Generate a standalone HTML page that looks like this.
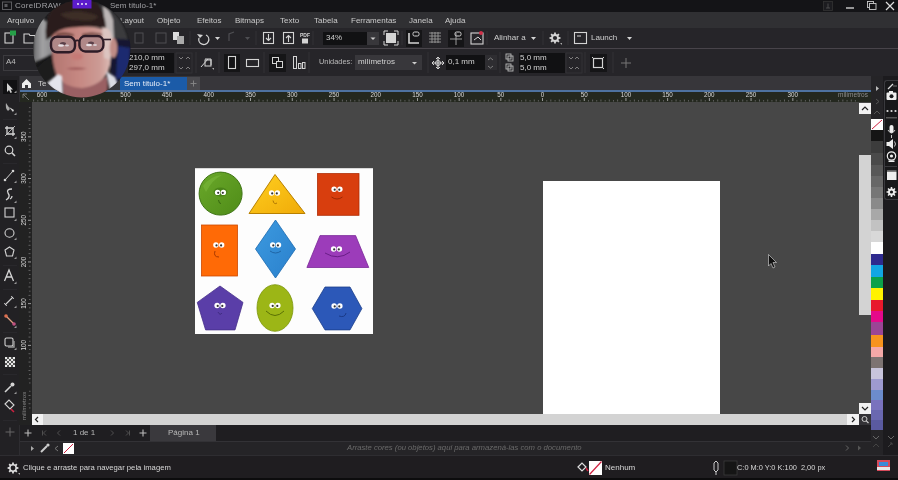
<!DOCTYPE html>
<html><head><meta charset="utf-8">
<style>
*{margin:0;padding:0;box-sizing:border-box}
html,body{width:898px;height:480px;overflow:hidden;background:#474747;font-family:"Liberation Sans",sans-serif;color:#d8d8d8}
.a{position:absolute}
.t{position:absolute;font-size:8px;line-height:10px;white-space:nowrap;color:#d2d2d2}
svg{position:absolute;overflow:visible}
</style></head><body>
<div style="position:absolute;left:0;top:0;width:898px;height:480px;overflow:hidden;filter:blur(0.4px)"><div class="a" style="left:0px;top:0px;width:898px;height:12px;background:#141417;"></div>
<div class="a" style="left:0px;top:12px;width:898px;height:16px;background:#303033;"></div>
<div class="a" style="left:0px;top:28px;width:898px;height:20px;background:#262529;"></div>
<div class="a" style="left:0px;top:48px;width:898px;height:1px;background:#48444a;"></div>
<div class="a" style="left:0px;top:49px;width:898px;height:27px;background:#262529;"></div>
<div class="a" style="left:20px;top:76px;width:851px;height:14px;background:#37363a;"></div>
<div class="a" style="left:0px;top:76px;width:20px;height:379px;background:#222124;"></div>
<div class="a" style="left:19px;top:76px;width:1px;height:379px;background:#2e2d31;"></div>
<div class="a" style="left:20px;top:90px;width:851px;height:2px;background:#4e72a0;"></div>
<div class="a" style="left:20px;top:92px;width:851px;height:10px;background:#24281f;"></div>
<div class="a" style="left:19px;top:102px;width:13px;height:323px;background:#222222;"></div>
<div class="a" style="left:543px;top:181px;width:177px;height:233px;background:#ffffff;"></div>
<!-- image -->
<svg class="a" style="left:0;top:0" width="898" height="480" viewBox="0 0 898 480">
<defs>
<linearGradient id="gG" x1="0" y1="0" x2="1" y2="1"><stop offset="0" stop-color="#6aa82a"/><stop offset="1" stop-color="#4f8c18"/></linearGradient>
<linearGradient id="gY" x1="0" y1="0" x2="1" y2="1"><stop offset="0" stop-color="#ffd020"/><stop offset="1" stop-color="#f0aa08"/></linearGradient>
<linearGradient id="gB" x1="0" y1="0" x2="1" y2="1"><stop offset="0" stop-color="#3c9ae0"/><stop offset="1" stop-color="#2a80cc"/></linearGradient>
</defs>
<rect x="195" y="168" width="178" height="166" fill="#fdfdfd"/>
<rect x="195" y="168" width="178" height="1" fill="#d8d8d8"/>
<circle cx="220.6" cy="193.6" r="21.5" fill="url(#gG)" stroke="#3e7414" stroke-width="1"/>
<path d="M203 186 Q210 176 222 175 Q212 180 206 192 Z" fill="#7ab83a" opacity="0.6"/>
<ellipse cx="220.5" cy="192" rx="7" ry="4.5" fill="#4a8418"/>
<circle cx="217.6" cy="192.4" r="2.7" fill="#fff"/><circle cx="223.4" cy="192.4" r="2.7" fill="#fff"/><circle cx="218.2" cy="192.8" r="1.1" fill="#333"/><circle cx="222.8" cy="192.8" r="1.1" fill="#333"/>
<path d="M218.5 200 Q219 204 221 203.5" stroke="#2f5a0c" stroke-width="0.8" fill="none"/>
<polygon points="275,174.5 249,213.5 305,213.5" fill="url(#gY)" stroke="#b88000" stroke-width="1" stroke-linejoin="round"/>
<circle cx="271.6" cy="193.0" r="2.7" fill="#fff"/><circle cx="277.4" cy="193.0" r="2.7" fill="#fff"/><circle cx="272.2" cy="193.4" r="1.1" fill="#333"/><circle cx="276.8" cy="193.4" r="1.1" fill="#333"/>
<path d="M273 200.5 Q274 205 277 203" stroke="#9a6400" stroke-width="0.8" fill="none"/>
<rect x="317.5" y="173.6" width="41.5" height="41.7" fill="#d83e0e" stroke="#b02c04" stroke-width="0.8"/>
<circle cx="334.1" cy="189.3" r="2.7" fill="#fff"/><circle cx="339.9" cy="189.3" r="2.7" fill="#fff"/><circle cx="334.7" cy="189.7" r="1.1" fill="#333"/><circle cx="339.3" cy="189.7" r="1.1" fill="#333"/>
<path d="M331.5 197 Q337 201 342.5 197" stroke="#9a2804" stroke-width="1" fill="none"/>
<rect x="201.5" y="225" width="36" height="51" fill="#ff6a06" stroke="#cc4a00" stroke-width="0.8"/>
<circle cx="215.9" cy="245.0" r="2.7" fill="#fff"/><circle cx="221.7" cy="245.0" r="2.7" fill="#fff"/><circle cx="216.5" cy="245.4" r="1.1" fill="#333"/><circle cx="221.1" cy="245.4" r="1.1" fill="#333"/>
<path d="M215 251 Q213 257 219 257" stroke="#a83800" stroke-width="1" fill="none"/>
<polygon points="275.5,220 295.5,249 275.5,278 255.5,249" fill="url(#gB)" stroke="#1a6ab0" stroke-width="0.8"/>
<circle cx="272.7" cy="245.0" r="2.7" fill="#fff"/><circle cx="278.5" cy="245.0" r="2.7" fill="#fff"/><circle cx="273.3" cy="245.4" r="1.1" fill="#333"/><circle cx="277.9" cy="245.4" r="1.1" fill="#333"/>
<path d="M270 251 Q275.5 255 281 251" stroke="#1a5a98" stroke-width="0.8" fill="none"/>
<polygon points="320,235.6 355.6,235.6 368.75,267.5 306.9,267.5" fill="#9c3cba" stroke="#7a2898" stroke-width="0.8"/>
<circle cx="333.6" cy="249.0" r="2.7" fill="#fff"/><circle cx="339.4" cy="249.0" r="2.7" fill="#fff"/><circle cx="334.2" cy="249.4" r="1.1" fill="#333"/><circle cx="338.8" cy="249.4" r="1.1" fill="#333"/>
<path d="M325 253 Q338 261 350 252" stroke="#6a1e88" stroke-width="1" fill="none"/>
<polygon points="220,286 243,302.4 235,329.9 205.6,329.9 197.25,302.4" fill="#5a3ea8" stroke="#48308a" stroke-width="0.8" stroke-linejoin="round"/>
<circle cx="217.1" cy="305.5" r="2.7" fill="#fff"/><circle cx="222.9" cy="305.5" r="2.7" fill="#fff"/><circle cx="217.7" cy="305.9" r="1.1" fill="#333"/><circle cx="222.3" cy="305.9" r="1.1" fill="#333"/>
<path d="M218 312 Q220 316 222 313" stroke="#3a2878" stroke-width="0.8" fill="none"/>
<ellipse cx="275" cy="308" rx="18" ry="23.3" fill="#9cb616" stroke="#7a9408" stroke-width="0.8"/>
<circle cx="272.1" cy="305.5" r="2.7" fill="#fff"/><circle cx="277.9" cy="305.5" r="2.7" fill="#fff"/><circle cx="272.7" cy="305.9" r="1.1" fill="#333"/><circle cx="277.3" cy="305.9" r="1.1" fill="#333"/>
<path d="M266 311 Q275 320 284 311" stroke="#5a7004" stroke-width="1" fill="none"/>
<polygon points="312.25,308.6 325,287 350,287 361.9,308.6 350,329.9 325,329.9" fill="#2c58b8" stroke="#1c3f8a" stroke-width="0.8" stroke-linejoin="round"/>
<circle cx="334.1" cy="306.0" r="2.7" fill="#fff"/><circle cx="339.9" cy="306.0" r="2.7" fill="#fff"/><circle cx="334.7" cy="306.4" r="1.1" fill="#333"/><circle cx="339.3" cy="306.4" r="1.1" fill="#333"/>
<path d="M339 316 Q345 318 346 313" stroke="#1a3a88" stroke-width="1" fill="none"/>
</svg>

<svg style="left:0;top:0" width="898" height="480"><path d="M768.5 254.5 L768.5 266 L771 263.5 L773 268 L775 267 L773 262.5 L776.5 262.5 Z" fill="#111" stroke="#ddd" stroke-width="0.6"/></svg>
<div class="a" style="left:19px;top:414px;width:13px;height:11px;background:#222222;"></div>
<div class="a" style="left:32px;top:414px;width:827px;height:11px;background:#d3d3d3;"></div>
<div class="a" style="left:32px;top:414px;width:11px;height:11px;background:#f2f2f2;"></div>
<svg style="left:31px;top:414px" width="12" height="11"><path d="M7 3 L4.5 5.5 L7 8" stroke="#222" stroke-width="1.2" fill="none"/></svg>
<div class="a" style="left:847px;top:414px;width:12px;height:11px;background:#f2f2f2;"></div>
<svg style="left:847px;top:414px" width="12" height="11"><path d="M5 3 L7.5 5.5 L5 8" stroke="#222" stroke-width="1.2" fill="none"/></svg>
<div class="a" style="left:859px;top:414px;width:12px;height:11px;background:#333236;"></div>
<svg style="left:859px;top:414px" width="12" height="11"><circle cx="5.5" cy="5" r="2.5" stroke="#ccc" stroke-width="1" fill="none"/><path d="M7.3 6.8 L9.5 9" stroke="#ccc" stroke-width="1.2"/></svg>
<div class="a" style="left:859px;top:102px;width:12px;height:312px;background:#474747;"></div>
<div class="a" style="left:859px;top:103px;width:12px;height:11px;background:#f2f2f2;"></div>
<svg style="left:859px;top:103px" width="12" height="11"><path d="M3 7 L6 4 L9 7" stroke="#222" stroke-width="1.2" fill="none"/></svg>
<div class="a" style="left:859px;top:155px;width:12px;height:160px;background:#d3d3d3;"></div>
<div class="a" style="left:859px;top:403px;width:12px;height:11px;background:#f2f2f2;"></div>
<svg style="left:859px;top:403px" width="12" height="11"><path d="M3 4 L6 7 L9 4" stroke="#222" stroke-width="1.2" fill="none"/></svg>
<div class="a" style="left:20px;top:425px;width:851px;height:16px;background:#1f1e21;"></div>
<div class="a" style="left:20px;top:441px;width:851px;height:1px;background:#333236;"></div>
<div class="a" style="left:20px;top:442px;width:851px;height:13px;background:#252427;"></div>
<div class="a" style="left:0px;top:455px;width:898px;height:1px;background:#2e2d31;"></div>
<div class="a" style="left:0px;top:456px;width:898px;height:22px;background:#1f1d20;"></div>
<div class="a" style="left:0px;top:478px;width:898px;height:2px;background:#0c0c0d;"></div>
<div class="a" style="left:150px;top:425px;width:66px;height:16px;background:#3a393d;"></div>
<div class="t" style="left:168px;top:428px;font-size:8px;color:#b8b8b8;">Página 1</div>
<div class="t" style="left:73px;top:428px;font-size:8px;color:#b8b8b8;">1 de 1</div>
<svg style="left:0;top:425px" width="200" height="16">
<path d="M24.5 8 H31.5 M28 4.5 V11.5" stroke="#bbb" stroke-width="1.1"/>
<path d="M46 5.5 L43.5 8 L46 10.5 M42.5 5.5 V10.5" stroke="#555" stroke-width="0.9" fill="none"/>
<path d="M60 5.5 L57.5 8 L60 10.5" stroke="#555" stroke-width="0.9" fill="none"/>
<path d="M111 5.5 L113.5 8 L111 10.5" stroke="#555" stroke-width="0.9" fill="none"/>
<path d="M126 5.5 L128.5 8 L126 10.5 M129.5 5.5 V10.5" stroke="#555" stroke-width="0.9" fill="none"/>
<path d="M139.5 8 H146.5 M143 4.5 V11.5" stroke="#bbb" stroke-width="1.1"/>
</svg>
<svg style="left:840px;top:441px" width="30" height="14"><path d="M6 4.5 L8.5 7 L6 9.5" stroke="#666" stroke-width="1" fill="none"/><path d="M18 4.5 L21 7 L18 9.5 Z" fill="#555"/></svg>
<div class="t" style="left:347px;top:443px;font-size:7.7px;color:#6a6a6a;font-style:italic">Arraste cores (ou objetos) aqui para armazená-las com o documento</div>
<svg style="left:0;top:441px" width="100" height="14">
<path d="M31 5 L34 7.5 L31 10 Z" fill="#aaa"/>
<path d="M41 11 L47 5" stroke="#ccc" stroke-width="2"/><circle cx="48" cy="4" r="1.6" fill="#ccc"/>
<path d="M58 5 L55 7.5 L58 10" stroke="#777" stroke-width="1" fill="none"/>
<rect x="63" y="2" width="11" height="11" fill="#fff"/><path d="M64 12 L73 3" stroke="#d02040" stroke-width="1"/>
</svg>
<svg style="left:0;top:456px" width="40" height="24"><path d="M16.89 11.07 L18.44 11.18 L18.44 12.82 L16.89 12.93 L16.41 14.09 L17.42 15.27 L16.27 16.42 L15.09 15.41 L13.93 15.89 L13.82 17.44 L12.18 17.44 L12.07 15.89 L10.91 15.41 L9.73 16.42 L8.58 15.27 L9.59 14.09 L9.11 12.93 L7.56 12.82 L7.56 11.18 L9.11 11.07 L9.59 9.91 L8.58 8.73 L9.73 7.58 L10.91 8.59 L12.07 8.11 L12.18 6.56 L13.82 6.56 L13.93 8.11 L15.09 8.59 L16.27 7.58 L17.42 8.73 L16.41 9.91 Z" fill="#ddd"/><circle cx="13" cy="12" r="2.4" fill="#1f1d20"/><path d="M18 17 L20 17 L20 19 Z" fill="#aaa"/></svg>
<div class="t" style="left:23px;top:463px;font-size:7.7px;color:#d8d8d8;">Clique e arraste para navegar pela imagem</div>
<svg style="left:575px;top:456px" width="40" height="24">
<path d="M3 11 L7 7 L11 11 L7 15 Z" fill="none" stroke="#ddd" stroke-width="1.2"/><path d="M11 12 L13 15" stroke="#d02040" stroke-width="1.5"/>
<rect x="14" y="5" width="13" height="14" fill="#fff"/><path d="M14.5 18.5 L26.5 5.5" stroke="#d02040" stroke-width="1.2"/>
</svg>
<div class="t" style="left:605px;top:463px;font-size:8px;color:#d8d8d8;">Nenhum</div>
<svg style="left:708px;top:456px" width="30" height="24">
<path d="M6 7 L8 5 L10 7 V14 L8 16 L6 14 Z" fill="none" stroke="#ccc" stroke-width="1"/><path d="M8 16 V19" stroke="#ccc"/>
<rect x="16" y="5" width="13" height="14" fill="#151515" stroke="#3a3a3a" stroke-width="0.8"/>
</svg>
<div class="t" style="left:737px;top:463px;font-size:7.4px;color:#d8d8d8;">C:0 M:0 Y:0 K:100 &nbsp;2,00 px</div>
<svg style="left:876px;top:458px" width="20" height="16">
<rect x="1" y="2" width="13" height="11" fill="#d64a5a"/><rect x="3" y="4" width="9" height="4" fill="#3a8ad8"/><rect x="1" y="9" width="13" height="3" fill="#e8e8e8"/>
</svg>
<div class="a" style="left:871px;top:76px;width:13px;height:379px;background:#252427;"></div>
<div class="a" style="left:883px;top:76px;width:15px;height:379px;background:#1c1b1e;"></div>
<svg style="left:871px;top:119px" width="12" height="11"><rect width="12" height="11" fill="#fff"/><line x1="1" y1="10" x2="11" y2="1" stroke="#d02040" stroke-width="1"/></svg>
<div class="a" style="left:871px;top:130px;width:12px;height:11px;background:#151515;"></div>
<div class="a" style="left:871px;top:141px;width:12px;height:12px;background:#3c3c3c;"></div>
<div class="a" style="left:871px;top:153px;width:12px;height:12px;background:#4a4a4a;"></div>
<div class="a" style="left:871px;top:165px;width:12px;height:11px;background:#585858;"></div>
<div class="a" style="left:871px;top:176px;width:12px;height:11px;background:#676767;"></div>
<div class="a" style="left:871px;top:187px;width:12px;height:11px;background:#767676;"></div>
<div class="a" style="left:871px;top:198px;width:12px;height:11px;background:#8a8a8a;"></div>
<div class="a" style="left:871px;top:209px;width:12px;height:11px;background:#a8a8a8;"></div>
<div class="a" style="left:871px;top:220px;width:12px;height:11px;background:#c2c2c2;"></div>
<div class="a" style="left:871px;top:231px;width:12px;height:11px;background:#d8d8d8;"></div>
<div class="a" style="left:871px;top:242px;width:12px;height:12px;background:#ffffff;"></div>
<div class="a" style="left:871px;top:254px;width:12px;height:11px;background:#2e2a8e;"></div>
<div class="a" style="left:871px;top:265px;width:12px;height:12px;background:#12a6e4;"></div>
<div class="a" style="left:871px;top:277px;width:12px;height:11px;background:#0ca14a;"></div>
<div class="a" style="left:871px;top:288px;width:12px;height:12px;background:#fff200;"></div>
<div class="a" style="left:871px;top:300px;width:12px;height:11px;background:#e8192c;"></div>
<div class="a" style="left:871px;top:311px;width:12px;height:11px;background:#e5098a;"></div>
<div class="a" style="left:871px;top:322px;width:12px;height:13px;background:#9b4595;"></div>
<div class="a" style="left:871px;top:335px;width:12px;height:12px;background:#f7931e;"></div>
<div class="a" style="left:871px;top:347px;width:12px;height:10px;background:#f4a8a8;"></div>
<div class="a" style="left:871px;top:357px;width:12px;height:11px;background:#7d7372;"></div>
<div class="a" style="left:871px;top:368px;width:12px;height:11px;background:#c8c4dc;"></div>
<div class="a" style="left:871px;top:379px;width:12px;height:11px;background:#9e9ad0;"></div>
<div class="a" style="left:871px;top:390px;width:12px;height:10px;background:#6c8ccc;"></div>
<div class="a" style="left:871px;top:400px;width:12px;height:10px;background:#7a72be;"></div>
<div class="a" style="left:871px;top:410px;width:12px;height:10px;background:#6a68b0;"></div>
<div class="a" style="left:871px;top:420px;width:12px;height:10px;background:#5a5aa0;"></div>
<svg style="left:871px;top:76px" width="12" height="43">
<path d="M5 10 L8 12.5 L5 15 Z" fill="#bbb"/>
<path d="M5 23 L8 25.5 L5 28" stroke="#555" fill="none"/>
<path d="M3 38 L6 35 L9 38" stroke="#555" fill="none"/>
</svg>
<svg style="left:871px;top:430px" width="27" height="25">
<path d="M2 6 L5 9 L8 6" stroke="#666" fill="none"/><path d="M17 6 L20 9 L23 6" stroke="#666" fill="none"/>
<path d="M2 17 L5 14 L8 17" stroke="#444" fill="none"/><path d="M17 17 L21 13 M19 13 H21 V15" stroke="#444" fill="none"/>
</svg>
<div class="a" style="left:884px;top:80px;width:14px;height:120px;background:#18181a;border:1px solid #3a3a3e;border-right:none;border-radius:3px 0 0 3px"></div>
<svg style="left:884px;top:80px" width="14" height="120" viewBox="0 0 14 120">
<path d="M4 9 L9 4" stroke="#ddd" stroke-width="1.2"/><path d="M9 6 H13" stroke="#888" stroke-width="0.8"/>
<rect x="2.5" y="12.5" width="10" height="7.5" rx="1" fill="#eee"/><rect x="5" y="11" width="4" height="2" fill="#eee"/><circle cx="7.5" cy="16.3" r="2" fill="#18181a"/>
<circle cx="3.5" cy="31" r="1.1" fill="#ddd"/><circle cx="7.5" cy="31" r="1.1" fill="#ddd"/><circle cx="11.5" cy="31" r="1.1" fill="#ddd"/>
<rect x="2" y="37" width="11" height="1.5" fill="#555"/>
<rect x="5.5" y="45" width="4" height="8" rx="2" fill="#eee"/><path d="M4 50 Q7.5 56 11 50 M7.5 55 V58" stroke="#ddd" stroke-width="0.9" fill="none"/>
<path d="M2.5 62 H5 L9 59 V69 L5 66 H2.5 Z" fill="#eee"/><path d="M10.5 61.5 Q12.5 64 10.5 66.5" stroke="#ddd" stroke-width="0.9" fill="none"/>
<circle cx="7.5" cy="76" r="4.2" fill="none" stroke="#eee" stroke-width="1.2"/><circle cx="7.5" cy="76" r="1.6" fill="#eee"/><rect x="4.5" y="80.5" width="6" height="1.5" fill="#eee"/>
<rect x="1" y="86" width="12" height="1" fill="#3a3a3e"/>
<rect x="3" y="92" width="9.5" height="8" fill="#eee"/><rect x="3" y="90.5" width="9.5" height="1.2" fill="#aaa"/>
<path d="M11.00 111.16 L12.44 111.26 L12.44 112.74 L11.00 112.84 L10.57 113.88 L11.52 114.97 L10.47 116.02 L9.38 115.07 L8.34 115.50 L8.24 116.94 L6.76 116.94 L6.66 115.50 L5.62 115.07 L4.53 116.02 L3.48 114.97 L4.43 113.88 L4.00 112.84 L2.56 112.74 L2.56 111.26 L4.00 111.16 L4.43 110.12 L3.48 109.03 L4.53 107.98 L5.62 108.93 L6.66 108.50 L6.76 107.06 L8.24 107.06 L8.34 108.50 L9.38 108.93 L10.47 107.98 L11.52 109.03 L10.57 110.12 Z" fill="#eee"/><circle cx="7.5" cy="112" r="1.6" fill="#18181a"/>
</svg>
<svg style="left:0;top:0" width="898" height="480">
<text x="42.0" y="97.3" font-size="6.3" fill="#d8d8d8" text-anchor="middle" font-family="Liberation Sans">600</text>
<rect x="41.6" y="98" width="0.9" height="3" fill="#aaa"/>
<text x="83.7" y="97.3" font-size="6.3" fill="#d8d8d8" text-anchor="middle" font-family="Liberation Sans">550</text>
<rect x="83.3" y="98" width="0.9" height="3" fill="#aaa"/>
<text x="125.4" y="97.3" font-size="6.3" fill="#d8d8d8" text-anchor="middle" font-family="Liberation Sans">500</text>
<rect x="125.0" y="98" width="0.9" height="3" fill="#aaa"/>
<text x="167.1" y="97.3" font-size="6.3" fill="#d8d8d8" text-anchor="middle" font-family="Liberation Sans">450</text>
<rect x="166.7" y="98" width="0.9" height="3" fill="#aaa"/>
<text x="208.8" y="97.3" font-size="6.3" fill="#d8d8d8" text-anchor="middle" font-family="Liberation Sans">400</text>
<rect x="208.4" y="98" width="0.9" height="3" fill="#aaa"/>
<text x="250.5" y="97.3" font-size="6.3" fill="#d8d8d8" text-anchor="middle" font-family="Liberation Sans">350</text>
<rect x="250.1" y="98" width="0.9" height="3" fill="#aaa"/>
<text x="292.2" y="97.3" font-size="6.3" fill="#d8d8d8" text-anchor="middle" font-family="Liberation Sans">300</text>
<rect x="291.8" y="98" width="0.9" height="3" fill="#aaa"/>
<text x="333.9" y="97.3" font-size="6.3" fill="#d8d8d8" text-anchor="middle" font-family="Liberation Sans">250</text>
<rect x="333.6" y="98" width="0.9" height="3" fill="#aaa"/>
<text x="375.7" y="97.3" font-size="6.3" fill="#d8d8d8" text-anchor="middle" font-family="Liberation Sans">200</text>
<rect x="375.3" y="98" width="0.9" height="3" fill="#aaa"/>
<text x="417.4" y="97.3" font-size="6.3" fill="#d8d8d8" text-anchor="middle" font-family="Liberation Sans">150</text>
<rect x="417.0" y="98" width="0.9" height="3" fill="#aaa"/>
<text x="459.1" y="97.3" font-size="6.3" fill="#d8d8d8" text-anchor="middle" font-family="Liberation Sans">100</text>
<rect x="458.7" y="98" width="0.9" height="3" fill="#aaa"/>
<text x="500.8" y="97.3" font-size="6.3" fill="#d8d8d8" text-anchor="middle" font-family="Liberation Sans">50</text>
<rect x="500.4" y="98" width="0.9" height="3" fill="#aaa"/>
<text x="542.5" y="97.3" font-size="6.3" fill="#d8d8d8" text-anchor="middle" font-family="Liberation Sans">0</text>
<rect x="542.1" y="98" width="0.9" height="3" fill="#aaa"/>
<text x="584.2" y="97.3" font-size="6.3" fill="#d8d8d8" text-anchor="middle" font-family="Liberation Sans">50</text>
<rect x="583.8" y="98" width="0.9" height="3" fill="#aaa"/>
<text x="625.9" y="97.3" font-size="6.3" fill="#d8d8d8" text-anchor="middle" font-family="Liberation Sans">100</text>
<rect x="625.5" y="98" width="0.9" height="3" fill="#aaa"/>
<text x="667.6" y="97.3" font-size="6.3" fill="#d8d8d8" text-anchor="middle" font-family="Liberation Sans">150</text>
<rect x="667.2" y="98" width="0.9" height="3" fill="#aaa"/>
<text x="709.3" y="97.3" font-size="6.3" fill="#d8d8d8" text-anchor="middle" font-family="Liberation Sans">200</text>
<rect x="708.9" y="98" width="0.9" height="3" fill="#aaa"/>
<text x="751.0" y="97.3" font-size="6.3" fill="#d8d8d8" text-anchor="middle" font-family="Liberation Sans">250</text>
<rect x="750.6" y="98" width="0.9" height="3" fill="#aaa"/>
<text x="792.8" y="97.3" font-size="6.3" fill="#d8d8d8" text-anchor="middle" font-family="Liberation Sans">300</text>
<rect x="792.4" y="98" width="0.9" height="3" fill="#aaa"/>
<rect x="33.2" y="99.5" width="0.9" height="2.0" fill="#6a6a6a"/>
<rect x="37.4" y="100.1" width="0.9" height="1.4" fill="#6a6a6a"/>
<rect x="45.8" y="100.1" width="0.9" height="1.4" fill="#6a6a6a"/>
<rect x="49.9" y="99.5" width="0.9" height="2.0" fill="#6a6a6a"/>
<rect x="54.1" y="100.1" width="0.9" height="1.4" fill="#6a6a6a"/>
<rect x="58.3" y="99.5" width="0.9" height="2.0" fill="#6a6a6a"/>
<rect x="62.4" y="100.1" width="0.9" height="1.4" fill="#6a6a6a"/>
<rect x="66.6" y="99.5" width="0.9" height="2.0" fill="#6a6a6a"/>
<rect x="70.8" y="100.1" width="0.9" height="1.4" fill="#6a6a6a"/>
<rect x="74.9" y="99.5" width="0.9" height="2.0" fill="#6a6a6a"/>
<rect x="79.1" y="100.1" width="0.9" height="1.4" fill="#6a6a6a"/>
<rect x="87.5" y="100.1" width="0.9" height="1.4" fill="#6a6a6a"/>
<rect x="91.6" y="99.5" width="0.9" height="2.0" fill="#6a6a6a"/>
<rect x="95.8" y="100.1" width="0.9" height="1.4" fill="#6a6a6a"/>
<rect x="100.0" y="99.5" width="0.9" height="2.0" fill="#6a6a6a"/>
<rect x="104.1" y="100.1" width="0.9" height="1.4" fill="#6a6a6a"/>
<rect x="108.3" y="99.5" width="0.9" height="2.0" fill="#6a6a6a"/>
<rect x="112.5" y="100.1" width="0.9" height="1.4" fill="#6a6a6a"/>
<rect x="116.7" y="99.5" width="0.9" height="2.0" fill="#6a6a6a"/>
<rect x="120.8" y="100.1" width="0.9" height="1.4" fill="#6a6a6a"/>
<rect x="129.2" y="100.1" width="0.9" height="1.4" fill="#6a6a6a"/>
<rect x="133.3" y="99.5" width="0.9" height="2.0" fill="#6a6a6a"/>
<rect x="137.5" y="100.1" width="0.9" height="1.4" fill="#6a6a6a"/>
<rect x="141.7" y="99.5" width="0.9" height="2.0" fill="#6a6a6a"/>
<rect x="145.9" y="100.1" width="0.9" height="1.4" fill="#6a6a6a"/>
<rect x="150.0" y="99.5" width="0.9" height="2.0" fill="#6a6a6a"/>
<rect x="154.2" y="100.1" width="0.9" height="1.4" fill="#6a6a6a"/>
<rect x="158.4" y="99.5" width="0.9" height="2.0" fill="#6a6a6a"/>
<rect x="162.5" y="100.1" width="0.9" height="1.4" fill="#6a6a6a"/>
<rect x="170.9" y="100.1" width="0.9" height="1.4" fill="#6a6a6a"/>
<rect x="175.1" y="99.5" width="0.9" height="2.0" fill="#6a6a6a"/>
<rect x="179.2" y="100.1" width="0.9" height="1.4" fill="#6a6a6a"/>
<rect x="183.4" y="99.5" width="0.9" height="2.0" fill="#6a6a6a"/>
<rect x="187.6" y="100.1" width="0.9" height="1.4" fill="#6a6a6a"/>
<rect x="191.7" y="99.5" width="0.9" height="2.0" fill="#6a6a6a"/>
<rect x="195.9" y="100.1" width="0.9" height="1.4" fill="#6a6a6a"/>
<rect x="200.1" y="99.5" width="0.9" height="2.0" fill="#6a6a6a"/>
<rect x="204.2" y="100.1" width="0.9" height="1.4" fill="#6a6a6a"/>
<rect x="212.6" y="100.1" width="0.9" height="1.4" fill="#6a6a6a"/>
<rect x="216.8" y="99.5" width="0.9" height="2.0" fill="#6a6a6a"/>
<rect x="220.9" y="100.1" width="0.9" height="1.4" fill="#6a6a6a"/>
<rect x="225.1" y="99.5" width="0.9" height="2.0" fill="#6a6a6a"/>
<rect x="229.3" y="100.1" width="0.9" height="1.4" fill="#6a6a6a"/>
<rect x="233.4" y="99.5" width="0.9" height="2.0" fill="#6a6a6a"/>
<rect x="237.6" y="100.1" width="0.9" height="1.4" fill="#6a6a6a"/>
<rect x="241.8" y="99.5" width="0.9" height="2.0" fill="#6a6a6a"/>
<rect x="246.0" y="100.1" width="0.9" height="1.4" fill="#6a6a6a"/>
<rect x="254.3" y="100.1" width="0.9" height="1.4" fill="#6a6a6a"/>
<rect x="258.5" y="99.5" width="0.9" height="2.0" fill="#6a6a6a"/>
<rect x="262.6" y="100.1" width="0.9" height="1.4" fill="#6a6a6a"/>
<rect x="266.8" y="99.5" width="0.9" height="2.0" fill="#6a6a6a"/>
<rect x="271.0" y="100.1" width="0.9" height="1.4" fill="#6a6a6a"/>
<rect x="275.2" y="99.5" width="0.9" height="2.0" fill="#6a6a6a"/>
<rect x="279.3" y="100.1" width="0.9" height="1.4" fill="#6a6a6a"/>
<rect x="283.5" y="99.5" width="0.9" height="2.0" fill="#6a6a6a"/>
<rect x="287.7" y="100.1" width="0.9" height="1.4" fill="#6a6a6a"/>
<rect x="296.0" y="100.1" width="0.9" height="1.4" fill="#6a6a6a"/>
<rect x="300.2" y="99.5" width="0.9" height="2.0" fill="#6a6a6a"/>
<rect x="304.4" y="100.1" width="0.9" height="1.4" fill="#6a6a6a"/>
<rect x="308.5" y="99.5" width="0.9" height="2.0" fill="#6a6a6a"/>
<rect x="312.7" y="100.1" width="0.9" height="1.4" fill="#6a6a6a"/>
<rect x="316.9" y="99.5" width="0.9" height="2.0" fill="#6a6a6a"/>
<rect x="321.0" y="100.1" width="0.9" height="1.4" fill="#6a6a6a"/>
<rect x="325.2" y="99.5" width="0.9" height="2.0" fill="#6a6a6a"/>
<rect x="329.4" y="100.1" width="0.9" height="1.4" fill="#6a6a6a"/>
<rect x="337.7" y="100.1" width="0.9" height="1.4" fill="#6a6a6a"/>
<rect x="341.9" y="99.5" width="0.9" height="2.0" fill="#6a6a6a"/>
<rect x="346.1" y="100.1" width="0.9" height="1.4" fill="#6a6a6a"/>
<rect x="350.2" y="99.5" width="0.9" height="2.0" fill="#6a6a6a"/>
<rect x="354.4" y="100.1" width="0.9" height="1.4" fill="#6a6a6a"/>
<rect x="358.6" y="99.5" width="0.9" height="2.0" fill="#6a6a6a"/>
<rect x="362.7" y="100.1" width="0.9" height="1.4" fill="#6a6a6a"/>
<rect x="366.9" y="99.5" width="0.9" height="2.0" fill="#6a6a6a"/>
<rect x="371.1" y="100.1" width="0.9" height="1.4" fill="#6a6a6a"/>
<rect x="379.4" y="100.1" width="0.9" height="1.4" fill="#6a6a6a"/>
<rect x="383.6" y="99.5" width="0.9" height="2.0" fill="#6a6a6a"/>
<rect x="387.8" y="100.1" width="0.9" height="1.4" fill="#6a6a6a"/>
<rect x="391.9" y="99.5" width="0.9" height="2.0" fill="#6a6a6a"/>
<rect x="396.1" y="100.1" width="0.9" height="1.4" fill="#6a6a6a"/>
<rect x="400.3" y="99.5" width="0.9" height="2.0" fill="#6a6a6a"/>
<rect x="404.5" y="100.1" width="0.9" height="1.4" fill="#6a6a6a"/>
<rect x="408.6" y="99.5" width="0.9" height="2.0" fill="#6a6a6a"/>
<rect x="412.8" y="100.1" width="0.9" height="1.4" fill="#6a6a6a"/>
<rect x="421.1" y="100.1" width="0.9" height="1.4" fill="#6a6a6a"/>
<rect x="425.3" y="99.5" width="0.9" height="2.0" fill="#6a6a6a"/>
<rect x="429.5" y="100.1" width="0.9" height="1.4" fill="#6a6a6a"/>
<rect x="433.7" y="99.5" width="0.9" height="2.0" fill="#6a6a6a"/>
<rect x="437.8" y="100.1" width="0.9" height="1.4" fill="#6a6a6a"/>
<rect x="442.0" y="99.5" width="0.9" height="2.0" fill="#6a6a6a"/>
<rect x="446.2" y="100.1" width="0.9" height="1.4" fill="#6a6a6a"/>
<rect x="450.3" y="99.5" width="0.9" height="2.0" fill="#6a6a6a"/>
<rect x="454.5" y="100.1" width="0.9" height="1.4" fill="#6a6a6a"/>
<rect x="462.9" y="100.1" width="0.9" height="1.4" fill="#6a6a6a"/>
<rect x="467.0" y="99.5" width="0.9" height="2.0" fill="#6a6a6a"/>
<rect x="471.2" y="100.1" width="0.9" height="1.4" fill="#6a6a6a"/>
<rect x="475.4" y="99.5" width="0.9" height="2.0" fill="#6a6a6a"/>
<rect x="479.5" y="100.1" width="0.9" height="1.4" fill="#6a6a6a"/>
<rect x="483.7" y="99.5" width="0.9" height="2.0" fill="#6a6a6a"/>
<rect x="487.9" y="100.1" width="0.9" height="1.4" fill="#6a6a6a"/>
<rect x="492.0" y="99.5" width="0.9" height="2.0" fill="#6a6a6a"/>
<rect x="496.2" y="100.1" width="0.9" height="1.4" fill="#6a6a6a"/>
<rect x="504.6" y="100.1" width="0.9" height="1.4" fill="#6a6a6a"/>
<rect x="508.7" y="99.5" width="0.9" height="2.0" fill="#6a6a6a"/>
<rect x="512.9" y="100.1" width="0.9" height="1.4" fill="#6a6a6a"/>
<rect x="517.1" y="99.5" width="0.9" height="2.0" fill="#6a6a6a"/>
<rect x="521.2" y="100.1" width="0.9" height="1.4" fill="#6a6a6a"/>
<rect x="525.4" y="99.5" width="0.9" height="2.0" fill="#6a6a6a"/>
<rect x="529.6" y="100.1" width="0.9" height="1.4" fill="#6a6a6a"/>
<rect x="533.8" y="99.5" width="0.9" height="2.0" fill="#6a6a6a"/>
<rect x="537.9" y="100.1" width="0.9" height="1.4" fill="#6a6a6a"/>
<rect x="546.3" y="100.1" width="0.9" height="1.4" fill="#6a6a6a"/>
<rect x="550.4" y="99.5" width="0.9" height="2.0" fill="#6a6a6a"/>
<rect x="554.6" y="100.1" width="0.9" height="1.4" fill="#6a6a6a"/>
<rect x="558.8" y="99.5" width="0.9" height="2.0" fill="#6a6a6a"/>
<rect x="563.0" y="100.1" width="0.9" height="1.4" fill="#6a6a6a"/>
<rect x="567.1" y="99.5" width="0.9" height="2.0" fill="#6a6a6a"/>
<rect x="571.3" y="100.1" width="0.9" height="1.4" fill="#6a6a6a"/>
<rect x="575.5" y="99.5" width="0.9" height="2.0" fill="#6a6a6a"/>
<rect x="579.6" y="100.1" width="0.9" height="1.4" fill="#6a6a6a"/>
<rect x="588.0" y="100.1" width="0.9" height="1.4" fill="#6a6a6a"/>
<rect x="592.2" y="99.5" width="0.9" height="2.0" fill="#6a6a6a"/>
<rect x="596.3" y="100.1" width="0.9" height="1.4" fill="#6a6a6a"/>
<rect x="600.5" y="99.5" width="0.9" height="2.0" fill="#6a6a6a"/>
<rect x="604.7" y="100.1" width="0.9" height="1.4" fill="#6a6a6a"/>
<rect x="608.8" y="99.5" width="0.9" height="2.0" fill="#6a6a6a"/>
<rect x="613.0" y="100.1" width="0.9" height="1.4" fill="#6a6a6a"/>
<rect x="617.2" y="99.5" width="0.9" height="2.0" fill="#6a6a6a"/>
<rect x="621.3" y="100.1" width="0.9" height="1.4" fill="#6a6a6a"/>
<rect x="629.7" y="100.1" width="0.9" height="1.4" fill="#6a6a6a"/>
<rect x="633.9" y="99.5" width="0.9" height="2.0" fill="#6a6a6a"/>
<rect x="638.0" y="100.1" width="0.9" height="1.4" fill="#6a6a6a"/>
<rect x="642.2" y="99.5" width="0.9" height="2.0" fill="#6a6a6a"/>
<rect x="646.4" y="100.1" width="0.9" height="1.4" fill="#6a6a6a"/>
<rect x="650.5" y="99.5" width="0.9" height="2.0" fill="#6a6a6a"/>
<rect x="654.7" y="100.1" width="0.9" height="1.4" fill="#6a6a6a"/>
<rect x="658.9" y="99.5" width="0.9" height="2.0" fill="#6a6a6a"/>
<rect x="663.1" y="100.1" width="0.9" height="1.4" fill="#6a6a6a"/>
<rect x="671.4" y="100.1" width="0.9" height="1.4" fill="#6a6a6a"/>
<rect x="675.6" y="99.5" width="0.9" height="2.0" fill="#6a6a6a"/>
<rect x="679.7" y="100.1" width="0.9" height="1.4" fill="#6a6a6a"/>
<rect x="683.9" y="99.5" width="0.9" height="2.0" fill="#6a6a6a"/>
<rect x="688.1" y="100.1" width="0.9" height="1.4" fill="#6a6a6a"/>
<rect x="692.3" y="99.5" width="0.9" height="2.0" fill="#6a6a6a"/>
<rect x="696.4" y="100.1" width="0.9" height="1.4" fill="#6a6a6a"/>
<rect x="700.6" y="99.5" width="0.9" height="2.0" fill="#6a6a6a"/>
<rect x="704.8" y="100.1" width="0.9" height="1.4" fill="#6a6a6a"/>
<rect x="713.1" y="100.1" width="0.9" height="1.4" fill="#6a6a6a"/>
<rect x="717.3" y="99.5" width="0.9" height="2.0" fill="#6a6a6a"/>
<rect x="721.5" y="100.1" width="0.9" height="1.4" fill="#6a6a6a"/>
<rect x="725.6" y="99.5" width="0.9" height="2.0" fill="#6a6a6a"/>
<rect x="729.8" y="100.1" width="0.9" height="1.4" fill="#6a6a6a"/>
<rect x="734.0" y="99.5" width="0.9" height="2.0" fill="#6a6a6a"/>
<rect x="738.1" y="100.1" width="0.9" height="1.4" fill="#6a6a6a"/>
<rect x="742.3" y="99.5" width="0.9" height="2.0" fill="#6a6a6a"/>
<rect x="746.5" y="100.1" width="0.9" height="1.4" fill="#6a6a6a"/>
<rect x="754.8" y="100.1" width="0.9" height="1.4" fill="#6a6a6a"/>
<rect x="759.0" y="99.5" width="0.9" height="2.0" fill="#6a6a6a"/>
<rect x="763.2" y="100.1" width="0.9" height="1.4" fill="#6a6a6a"/>
<rect x="767.3" y="99.5" width="0.9" height="2.0" fill="#6a6a6a"/>
<rect x="771.5" y="100.1" width="0.9" height="1.4" fill="#6a6a6a"/>
<rect x="775.7" y="99.5" width="0.9" height="2.0" fill="#6a6a6a"/>
<rect x="779.8" y="100.1" width="0.9" height="1.4" fill="#6a6a6a"/>
<rect x="784.0" y="99.5" width="0.9" height="2.0" fill="#6a6a6a"/>
<rect x="788.2" y="100.1" width="0.9" height="1.4" fill="#6a6a6a"/>
<rect x="796.5" y="100.1" width="0.9" height="1.4" fill="#6a6a6a"/>
<rect x="800.7" y="99.5" width="0.9" height="2.0" fill="#6a6a6a"/>
<rect x="804.9" y="100.1" width="0.9" height="1.4" fill="#6a6a6a"/>
<rect x="809.0" y="99.5" width="0.9" height="2.0" fill="#6a6a6a"/>
<rect x="813.2" y="100.1" width="0.9" height="1.4" fill="#6a6a6a"/>
<rect x="817.4" y="99.5" width="0.9" height="2.0" fill="#6a6a6a"/>
<rect x="821.6" y="100.1" width="0.9" height="1.4" fill="#6a6a6a"/>
<rect x="825.7" y="99.5" width="0.9" height="2.0" fill="#6a6a6a"/>
<rect x="829.9" y="100.1" width="0.9" height="1.4" fill="#6a6a6a"/>
<rect x="838.2" y="100.1" width="0.9" height="1.4" fill="#6a6a6a"/>
<rect x="842.4" y="99.5" width="0.9" height="2.0" fill="#6a6a6a"/>
<rect x="846.6" y="100.1" width="0.9" height="1.4" fill="#6a6a6a"/>
<rect x="850.8" y="99.5" width="0.9" height="2.0" fill="#6a6a6a"/>
<rect x="854.9" y="100.1" width="0.9" height="1.4" fill="#6a6a6a"/>
<text x="853" y="97" font-size="6.5" fill="#8e8e8e" text-anchor="middle" font-family="Liberation Sans">milímetros</text>
<text transform="translate(26.3 345.3) rotate(-90)" font-size="6.3" fill="#d8d8d8" text-anchor="middle" font-family="Liberation Sans">100</text>
<rect x="28" y="344.9" width="3" height="0.9" fill="#aaa"/>
<text transform="translate(26.3 303.6) rotate(-90)" font-size="6.3" fill="#d8d8d8" text-anchor="middle" font-family="Liberation Sans">150</text>
<rect x="28" y="303.2" width="3" height="0.9" fill="#aaa"/>
<text transform="translate(26.3 261.9) rotate(-90)" font-size="6.3" fill="#d8d8d8" text-anchor="middle" font-family="Liberation Sans">200</text>
<rect x="28" y="261.5" width="3" height="0.9" fill="#aaa"/>
<text transform="translate(26.3 220.2) rotate(-90)" font-size="6.3" fill="#d8d8d8" text-anchor="middle" font-family="Liberation Sans">250</text>
<rect x="28" y="219.8" width="3" height="0.9" fill="#aaa"/>
<text transform="translate(26.3 178.5) rotate(-90)" font-size="6.3" fill="#d8d8d8" text-anchor="middle" font-family="Liberation Sans">300</text>
<rect x="28" y="178.1" width="3" height="0.9" fill="#aaa"/>
<text transform="translate(26.3 136.8) rotate(-90)" font-size="6.3" fill="#d8d8d8" text-anchor="middle" font-family="Liberation Sans">350</text>
<rect x="28" y="136.4" width="3" height="0.9" fill="#aaa"/>
<rect x="29.1" y="407.5" width="1.4" height="0.9" fill="#6a6a6a"/>
<rect x="28.5" y="403.3" width="2.0" height="0.9" fill="#6a6a6a"/>
<rect x="29.1" y="399.2" width="1.4" height="0.9" fill="#6a6a6a"/>
<rect x="28.5" y="395.0" width="2.0" height="0.9" fill="#6a6a6a"/>
<rect x="29.1" y="390.8" width="1.4" height="0.9" fill="#6a6a6a"/>
<rect x="29.1" y="382.5" width="1.4" height="0.9" fill="#6a6a6a"/>
<rect x="28.5" y="378.3" width="2.0" height="0.9" fill="#6a6a6a"/>
<rect x="29.1" y="374.1" width="1.4" height="0.9" fill="#6a6a6a"/>
<rect x="28.5" y="370.0" width="2.0" height="0.9" fill="#6a6a6a"/>
<rect x="29.1" y="365.8" width="1.4" height="0.9" fill="#6a6a6a"/>
<rect x="28.5" y="361.6" width="2.0" height="0.9" fill="#6a6a6a"/>
<rect x="29.1" y="357.5" width="1.4" height="0.9" fill="#6a6a6a"/>
<rect x="28.5" y="353.3" width="2.0" height="0.9" fill="#6a6a6a"/>
<rect x="29.1" y="349.1" width="1.4" height="0.9" fill="#6a6a6a"/>
<rect x="29.1" y="340.8" width="1.4" height="0.9" fill="#6a6a6a"/>
<rect x="28.5" y="336.6" width="2.0" height="0.9" fill="#6a6a6a"/>
<rect x="29.1" y="332.4" width="1.4" height="0.9" fill="#6a6a6a"/>
<rect x="28.5" y="328.3" width="2.0" height="0.9" fill="#6a6a6a"/>
<rect x="29.1" y="324.1" width="1.4" height="0.9" fill="#6a6a6a"/>
<rect x="28.5" y="319.9" width="2.0" height="0.9" fill="#6a6a6a"/>
<rect x="29.1" y="315.7" width="1.4" height="0.9" fill="#6a6a6a"/>
<rect x="28.5" y="311.6" width="2.0" height="0.9" fill="#6a6a6a"/>
<rect x="29.1" y="307.4" width="1.4" height="0.9" fill="#6a6a6a"/>
<rect x="29.1" y="299.1" width="1.4" height="0.9" fill="#6a6a6a"/>
<rect x="28.5" y="294.9" width="2.0" height="0.9" fill="#6a6a6a"/>
<rect x="29.1" y="290.7" width="1.4" height="0.9" fill="#6a6a6a"/>
<rect x="28.5" y="286.5" width="2.0" height="0.9" fill="#6a6a6a"/>
<rect x="29.1" y="282.4" width="1.4" height="0.9" fill="#6a6a6a"/>
<rect x="28.5" y="278.2" width="2.0" height="0.9" fill="#6a6a6a"/>
<rect x="29.1" y="274.0" width="1.4" height="0.9" fill="#6a6a6a"/>
<rect x="28.5" y="269.9" width="2.0" height="0.9" fill="#6a6a6a"/>
<rect x="29.1" y="265.7" width="1.4" height="0.9" fill="#6a6a6a"/>
<rect x="29.1" y="257.3" width="1.4" height="0.9" fill="#6a6a6a"/>
<rect x="28.5" y="253.2" width="2.0" height="0.9" fill="#6a6a6a"/>
<rect x="29.1" y="249.0" width="1.4" height="0.9" fill="#6a6a6a"/>
<rect x="28.5" y="244.8" width="2.0" height="0.9" fill="#6a6a6a"/>
<rect x="29.1" y="240.7" width="1.4" height="0.9" fill="#6a6a6a"/>
<rect x="28.5" y="236.5" width="2.0" height="0.9" fill="#6a6a6a"/>
<rect x="29.1" y="232.3" width="1.4" height="0.9" fill="#6a6a6a"/>
<rect x="28.5" y="228.1" width="2.0" height="0.9" fill="#6a6a6a"/>
<rect x="29.1" y="224.0" width="1.4" height="0.9" fill="#6a6a6a"/>
<rect x="29.1" y="215.6" width="1.4" height="0.9" fill="#6a6a6a"/>
<rect x="28.5" y="211.5" width="2.0" height="0.9" fill="#6a6a6a"/>
<rect x="29.1" y="207.3" width="1.4" height="0.9" fill="#6a6a6a"/>
<rect x="28.5" y="203.1" width="2.0" height="0.9" fill="#6a6a6a"/>
<rect x="29.1" y="199.0" width="1.4" height="0.9" fill="#6a6a6a"/>
<rect x="28.5" y="194.8" width="2.0" height="0.9" fill="#6a6a6a"/>
<rect x="29.1" y="190.6" width="1.4" height="0.9" fill="#6a6a6a"/>
<rect x="28.5" y="186.4" width="2.0" height="0.9" fill="#6a6a6a"/>
<rect x="29.1" y="182.3" width="1.4" height="0.9" fill="#6a6a6a"/>
<rect x="29.1" y="173.9" width="1.4" height="0.9" fill="#6a6a6a"/>
<rect x="28.5" y="169.8" width="2.0" height="0.9" fill="#6a6a6a"/>
<rect x="29.1" y="165.6" width="1.4" height="0.9" fill="#6a6a6a"/>
<rect x="28.5" y="161.4" width="2.0" height="0.9" fill="#6a6a6a"/>
<rect x="29.1" y="157.2" width="1.4" height="0.9" fill="#6a6a6a"/>
<rect x="28.5" y="153.1" width="2.0" height="0.9" fill="#6a6a6a"/>
<rect x="29.1" y="148.9" width="1.4" height="0.9" fill="#6a6a6a"/>
<rect x="28.5" y="144.7" width="2.0" height="0.9" fill="#6a6a6a"/>
<rect x="29.1" y="140.6" width="1.4" height="0.9" fill="#6a6a6a"/>
<rect x="29.1" y="132.2" width="1.4" height="0.9" fill="#6a6a6a"/>
<rect x="28.5" y="128.0" width="2.0" height="0.9" fill="#6a6a6a"/>
<rect x="29.1" y="123.9" width="1.4" height="0.9" fill="#6a6a6a"/>
<rect x="28.5" y="119.7" width="2.0" height="0.9" fill="#6a6a6a"/>
<rect x="29.1" y="115.5" width="1.4" height="0.9" fill="#6a6a6a"/>
<rect x="28.5" y="111.4" width="2.0" height="0.9" fill="#6a6a6a"/>
<rect x="29.1" y="107.2" width="1.4" height="0.9" fill="#6a6a6a"/>
<text transform="translate(26.3 406) rotate(-90)" font-size="6.2" fill="#8a8a8a" text-anchor="middle" font-family="Liberation Sans">milímetros</text>
<path d="M23 94 L29 100 M23 94 V98 M23 94 H27" stroke="#888" stroke-width="0.8" fill="none"/>
</svg>
<div class="t" style="left:15px;top:1px;font-size:8px;color:#a0a0a4;letter-spacing:0.3px">CorelDRAW</div>
<svg style="left:0;top:0" width="14" height="12"><rect x="2.5" y="2" width="9" height="7.5" fill="none" stroke="#5a5a5e" stroke-width="1"/><rect x="4.5" y="4" width="3" height="3" fill="#5a5a5e"/></svg>
<div class="t" style="left:110px;top:1px;font-size:8px;color:#a0a0a4;">Sem título-1*</div>
<svg style="left:820px;top:0" width="78" height="12">
<rect x="3.5" y="1.5" width="9" height="9" fill="#1c1c20" stroke="#333" stroke-width="0.8"/><path d="M8 3.5 V8 M6 8 H10" stroke="#555" stroke-width="0.8"/>
<path d="M26 8 H34" stroke="#ddd" stroke-width="1.3"/>
<rect x="47.5" y="1.5" width="6" height="6" fill="none" stroke="#ccc" stroke-width="0.9"/><rect x="49.5" y="3.5" width="6.5" height="6" fill="#141417" stroke="#ccc" stroke-width="0.9"/>
<path d="M66 2 L74 10 M74 2 L66 10" stroke="#ddd" stroke-width="1.2"/>
</svg>
<div class="t" style="left:7px;top:16px;font-size:8px;color:#cacaca;">Arquivo</div>
<div class="t" style="left:44px;top:16px;font-size:8px;color:#cacaca;">Editar</div>
<div class="t" style="left:80px;top:16px;font-size:8px;color:#cacaca;">Exibir</div>
<div class="t" style="left:120px;top:16px;font-size:8px;color:#cacaca;">Layout</div>
<div class="t" style="left:157px;top:16px;font-size:8px;color:#cacaca;">Objeto</div>
<div class="t" style="left:197px;top:16px;font-size:8px;color:#cacaca;">Efeitos</div>
<div class="t" style="left:235px;top:16px;font-size:8px;color:#cacaca;">Bitmaps</div>
<div class="t" style="left:280px;top:16px;font-size:8px;color:#cacaca;">Texto</div>
<div class="t" style="left:314px;top:16px;font-size:8px;color:#cacaca;">Tabela</div>
<div class="t" style="left:351px;top:16px;font-size:8px;color:#cacaca;">Ferramentas</div>
<div class="t" style="left:409px;top:16px;font-size:8px;color:#cacaca;">Janela</div>
<div class="t" style="left:445px;top:16px;font-size:8px;color:#cacaca;">Ajuda</div>
<svg style="left:0;top:28px" width="898" height="20">
<rect x="5" y="5" width="8" height="10" fill="none" stroke="#d4d4d4" stroke-width="1.1"/><rect x="10" y="2.5" width="6" height="5" fill="#26a048"/>
<path d="M24 6 H29 L30 7.5 H35 V15 H24 Z" fill="none" stroke="#d4d4d4" stroke-width="1.1"/>
<rect x="135" y="5" width="8" height="10" fill="none" stroke="#4e4e52" stroke-width="1"/>
<rect x="156" y="5" width="10" height="10" fill="none" stroke="#4e4e52" stroke-width="1"/>
<rect x="173" y="4" width="6" height="8" fill="#ddd"/><rect x="177" y="8" width="7" height="8" fill="#aaa"/>
<path d="M206 7 A5 5 0 1 1 199 10" stroke="#d4d4d4" stroke-width="1.3" fill="none"/><path d="M197 6 L200 10 L203 7" fill="#d4d4d4"/>
<path d="M215 9 L220 9 L217.5 12 Z" fill="#d4d4d4"/>
<path d="M229 13 V6 L234 4" stroke="#4e4e52" stroke-width="1.2" fill="none"/>
<path d="M245 9 L250 9 L247.5 12 Z" fill="#4e4e52"/>
<rect x="263.5" y="4.5" width="10" height="11" fill="none" stroke="#d4d4d4" stroke-width="1.1"/><path d="M268.5 6 V12 M266 10 L268.5 12.5 L271 10" stroke="#d4d4d4" stroke-width="1.1" fill="none"/>
<rect x="283.5" y="4.5" width="10" height="11" fill="none" stroke="#d4d4d4" stroke-width="1.1"/><path d="M288.5 14 V8 M286 10 L288.5 7.5 L291 10" stroke="#d4d4d4" stroke-width="1.1" fill="none"/>
<text x="300" y="9" font-size="5" fill="#d4d4d4" font-family="Liberation Sans" font-weight="bold">PDF</text><rect x="302" y="10.5" width="6" height="5" fill="#d4d4d4"/>
<rect x="386" y="5" width="10" height="10" fill="#d4d4d4"/><path d="M384 3 H388 M384 3 V7 M398 3 H394 M398 3 V7 M384 17 H388 M384 17 V13 M398 17 H394 M398 17 V13" stroke="#d4d4d4" fill="none"/>
<rect x="406" y="2" width="16" height="17" fill="#151517"/>
<path d="M409 5 V15 H419" stroke="#d4d4d4" stroke-width="1.6" fill="none"/><rect x="413" y="4" width="6" height="4" rx="1.5" fill="none" stroke="#d4d4d4"/>
<path d="M429 5 H441 M429 8 H441 M429 11 H441 M429 14 H441 M432 4 V15 M435 4 V15 M438 4 V15" stroke="#999" stroke-width="0.9"/>
<rect x="448" y="2" width="16" height="17" fill="#151517"/>
<path d="M450 11 H462 M456 5 V17" stroke="#aaa" stroke-width="0.9"/><rect x="455" y="4" width="6" height="4" rx="1.5" fill="none" stroke="#d4d4d4"/>
<rect x="471" y="5" width="12" height="11" fill="none" stroke="#d4d4d4" stroke-width="1.1"/><path d="M474 12 L478 9 L481 12" stroke="#d4d4d4" fill="none"/><circle cx="481" cy="5" r="2" fill="#d03048"/>
<path d="M531 9 L536 9 L533.5 12 Z" fill="#d4d4d4"/>
<path d="M558.89 9.07 L560.54 9.17 L560.54 10.83 L558.89 10.93 L558.41 12.09 L559.50 13.33 L558.33 14.50 L557.09 13.41 L555.93 13.89 L555.83 15.54 L554.17 15.54 L554.07 13.89 L552.91 13.41 L551.67 14.50 L550.50 13.33 L551.59 12.09 L551.11 10.93 L549.46 10.83 L549.46 9.17 L551.11 9.07 L551.59 7.91 L550.50 6.67 L551.67 5.50 L552.91 6.59 L554.07 6.11 L554.17 4.46 L555.83 4.46 L555.93 6.11 L557.09 6.59 L558.33 5.50 L559.50 6.67 L558.41 7.91 Z" fill="#d4d4d4"/><circle cx="555" cy="10" r="2.1" fill="#262529"/><path d="M560 15 L562 15 L562 17 Z" fill="#aaa"/>
<rect x="574.5" y="4.5" width="12" height="11" fill="none" stroke="#d4d4d4" stroke-width="1.1"/><path d="M577 8 H581" stroke="#d4d4d4"/>
<path d="M627 9 L632 9 L629.5 12 Z" fill="#d4d4d4"/>
<path d="M372 9 L376 9 L374 11.5 Z" fill="#d4d4d4"/>
<path d="M125 3 V17 M190 3 V17 M256 3 V17 M313 3 V17 M402 3 V17 M487 3 V17 M543 3 V17 M568 3 V17" stroke="#333236" stroke-width="1"/>
</svg>
<div class="a" style="left:323px;top:32px;width:44px;height:13px;background:#111113;"></div>
<div class="a" style="left:367px;top:32px;width:12px;height:13px;background:#38373b;"></div>
<svg style="left:367px;top:32px" width="12" height="13"><path d="M3.5 5.5 L8.5 5.5 L6 8 Z" fill="#ccc"/></svg>
<div class="t" style="left:326px;top:33px;font-size:8px;color:#d0d0d0;">34%</div>
<div class="t" style="left:494px;top:33px;font-size:8px;color:#cfcfcf;">Alinhar a</div>
<div class="t" style="left:591px;top:33px;font-size:8px;color:#cfcfcf;">Launch</div>
<div class="a" style="left:3px;top:55px;width:40px;height:16px;border:1px solid #3c3b3f"></div>
<div class="t" style="left:6px;top:57px;font-size:8px;color:#bbbbbb;">A4</div>
<div class="a" style="left:128px;top:53px;width:46px;height:10px;background:#111113;"></div>
<div class="a" style="left:128px;top:63px;width:46px;height:10px;background:#111113;"></div>
<div class="t" style="left:129px;top:53px;font-size:8px;color:#d2d2d2;">210,0 mm</div>
<div class="t" style="left:129px;top:63px;font-size:8px;color:#d2d2d2;">297,0 mm</div>
<div class="t" style="left:319px;top:57px;font-size:7.4px;color:#bbbbbb;">Unidades:</div>
<div class="a" style="left:355px;top:55px;width:67px;height:15px;background:#38373b;"></div>
<div class="t" style="left:358px;top:57px;font-size:8px;color:#d0d0d0;">milímetros</div>
<svg style="left:355px;top:55px" width="67" height="15"><path d="M57 7 L62 7 L59.5 9.5 Z" fill="#ccc"/></svg>
<div class="a" style="left:446px;top:55px;width:39px;height:15px;background:#111113;"></div>
<div class="a" style="left:485px;top:55px;width:12px;height:15px;background:#2e2d31;"></div>
<div class="t" style="left:448px;top:57px;font-size:8px;color:#d2d2d2;">0,1 mm</div>
<div class="a" style="left:519px;top:53px;width:46px;height:10px;background:#111113;"></div>
<div class="a" style="left:519px;top:63px;width:46px;height:10px;background:#111113;"></div>
<div class="t" style="left:520px;top:53px;font-size:8px;color:#d2d2d2;">5,0 mm</div>
<div class="t" style="left:520px;top:63px;font-size:8px;color:#d2d2d2;">5,0 mm</div>
<svg style="left:0;top:49px" width="898" height="27">
<path d="M179 8 L181 10 L183 8 M186 10 L188 8 L190 10 M179 18 L181 20 L183 18 M186 20 L188 18 L190 20" stroke="#888" stroke-width="0.9" fill="none"/>
<rect x="176" y="4" width="16" height="20" fill="none" stroke="#333236"/>
<path d="M201 18 L208 10 M205 10 H211 V16" stroke="#d4d4d4" stroke-width="1" fill="none"/><rect x="205" y="11" width="6" height="6" fill="none" stroke="#d4d4d4" stroke-width="1"/><path d="M212 19 L214 19 L214 21 Z" fill="#aaa"/>
<rect x="224" y="5" width="16" height="18" fill="#151517"/>
<rect x="228.5" y="7.5" width="7" height="12" fill="none" stroke="#d4d4d4" stroke-width="1.1"/>
<rect x="246.5" y="10.5" width="12" height="7" fill="none" stroke="#d4d4d4" stroke-width="1.1"/>
<rect x="269" y="5" width="17" height="18" fill="#151517"/>
<rect x="272.5" y="8.5" width="6" height="6" fill="none" stroke="#d4d4d4"/><rect x="276.5" y="12.5" width="6" height="6" fill="#151517" stroke="#d4d4d4"/>
<rect x="293.5" y="7.5" width="3" height="12" fill="none" stroke="#d4d4d4"/><rect x="298.5" y="14.5" width="2.5" height="5" fill="none" stroke="#d4d4d4"/><rect x="302.5" y="13.5" width="2.5" height="6" fill="none" stroke="#d4d4d4"/>
<path d="M433 14 H443 M438 9 V19" stroke="#d4d4d4" stroke-width="1.2"/><path d="M436 10 L438 8 L440 10 M436 18 L438 20 L440 18 M434 12 L432 14 L434 16 M442 12 L444 14 L442 16" stroke="#d4d4d4" fill="none"/><circle cx="438" cy="14" r="2.5" fill="none" stroke="#d4d4d4"/>
<path d="M488 11 L490.5 9 L493 11 M488 17 L490.5 19 L493 17" stroke="#888" stroke-width="0.9" fill="none"/>
<rect x="506" y="5" width="5" height="5" fill="none" stroke="#bbb" stroke-width="0.9"/><rect x="508" y="7" width="5" height="5" fill="none" stroke="#bbb" stroke-width="0.9"/>
<rect x="506" y="15" width="5" height="5" fill="none" stroke="#bbb" stroke-width="0.9"/><rect x="508" y="17" width="5" height="5" fill="none" stroke="#bbb" stroke-width="0.9"/>
<path d="M569 8 L571 10 L573 8 M575 10 L577 8 L579 10 M569 18 L571 20 L573 18 M575 20 L577 18 L579 20" stroke="#888" stroke-width="0.9" fill="none"/>
<rect x="566" y="4" width="16" height="20" fill="none" stroke="#333236"/>
<rect x="590" y="5" width="17" height="18" fill="#151517"/>
<rect x="593.5" y="9.5" width="9" height="9" fill="none" stroke="#d4d4d4" stroke-width="1.2"/><path d="M592 8 L594 10 M604 8 L602 10 M604 20 L602 18" stroke="#d4d4d4"/>
<path d="M621 14 H631 M626 9 V19" stroke="#777" stroke-width="1"/>
<path d="M116 3 V24 M196 3 V24 M219 3 V24 M264 3 V24 M309 3 V24 M428 3 V24 M500 3 V24 M585 3 V24 M613 3 V24" stroke="#333236" stroke-width="1"/>
</svg>
<div class="a" style="left:120px;top:77px;width:67px;height:13px;background:#1b5ba8;"></div>
<div class="t" style="left:124px;top:79px;font-size:8px;color:#e8eef8;">Sem título-1*</div>
<div class="a" style="left:187px;top:77px;width:13px;height:13px;background:#4a494d;"></div>
<svg style="left:187px;top:77px" width="13" height="13"><path d="M3.5 6.5 H9.5 M6.5 3.5 V9.5" stroke="#888" stroke-width="0.9"/></svg>
<div class="t" style="left:38px;top:79px;font-size:8px;color:#d0d0d0;">Te</div>
<svg style="left:20px;top:76px" width="14" height="14"><path d="M2 7.5 L6.5 3 L11 7.5 V12 H8 V9 H5 V12 H2 Z" fill="#eee"/></svg>
<svg style="left:0;top:0" width="20" height="455">
<rect x="3" y="80" width="14" height="14" fill="#111113"/>
<path d="M7 83 L7 92 L9 90 L10.5 93 L12 92.3 L10.6 89.5 L13 89.5 Z" fill="#d4d4d4"/>
<path d="M14 93 L16.5 93 L16.5 90.5 Z" fill="#999"/>
<path d="M6 103 Q5 108 8 111 L10 109 Q8 106 6 103 Z" fill="#aaa"/><path d="M9 107 L13 112 L14 110 Z" fill="#d4d4d4"/><path d="M14 115 L16.5 115 L16.5 112.5 Z" fill="#999"/>
<path d="M7 126 V134 H15 M5 128 H13 V136" stroke="#d4d4d4" stroke-width="1.3" fill="none"/><path d="M5 136 L15 126" stroke="#d4d4d4" stroke-width="0.8"/><path d="M14 139 L16.5 139 L16.5 136.5 Z" fill="#999"/>
<circle cx="9" cy="150" r="3.8" fill="none" stroke="#d4d4d4" stroke-width="1.2"/><path d="M11.8 152.8 L15 156" stroke="#d4d4d4" stroke-width="1.6"/>
<rect x="3" y="119" width="14" height="0.8" fill="#2c2b2f"/><rect x="3" y="163" width="14" height="0.8" fill="#2c2b2f"/>
<path d="M5 180 L13 171" stroke="#d4d4d4" stroke-width="1"/><circle cx="5" cy="180" r="1.3" fill="#d4d4d4"/><circle cx="13" cy="171" r="1.3" fill="#d4d4d4"/><path d="M14 183 L16.5 183 L16.5 180.5 Z" fill="#999"/>
<path d="M12 189 Q6 189 8 193 Q11 197 6 200 M10 199 Q12 198 12 196" stroke="#d4d4d4" stroke-width="1.3" fill="none"/><path d="M14 203 L16.5 203 L16.5 200.5 Z" fill="#999"/>
<rect x="5" y="208" width="9" height="9" fill="none" stroke="#d4d4d4" stroke-width="1.1"/><path d="M14 221 L16.5 221 L16.5 218.5 Z" fill="#999"/>
<ellipse cx="9.5" cy="233" rx="4.5" ry="4.2" fill="none" stroke="#d4d4d4" stroke-width="1.1"/><path d="M14 240 L16.5 240 L16.5 237.5 Z" fill="#999"/>
<path d="M9.5 247 L14 250 L12.5 256 H6.5 L5 250 Z" fill="none" stroke="#d4d4d4" stroke-width="1.1"/><path d="M14 259 L16.5 259 L16.5 256.5 Z" fill="#999"/>
<rect x="3" y="265" width="14" height="0.8" fill="#2c2b2f"/>
<path d="M4.5 281 L9 270 L13.5 281 M6.5 277 H11.5" stroke="#d4d4d4" stroke-width="1.3" fill="none"/><path d="M14 284 L16.5 284 L16.5 281.5 Z" fill="#999"/>
<rect x="3" y="289" width="14" height="0.8" fill="#2c2b2f"/>
<path d="M5 305 L13 297" stroke="#d4d4d4" stroke-width="1.1"/><path d="M4 303 L7 306 M11 296 L14 299" stroke="#d4d4d4" stroke-width="0.8"/><path d="M14 308 L16.5 308 L16.5 305.5 Z" fill="#999"/>
<path d="M6 316 L14 324" stroke="#e0a080" stroke-width="1.3"/><circle cx="6" cy="316" r="1.8" fill="#e07050"/><circle cx="14" cy="324" r="1.8" fill="#c05080"/><path d="M14 328 L16.5 328 L16.5 325.5 Z" fill="#999"/>
<rect x="3" y="332" width="14" height="0.8" fill="#2c2b2f"/>
<rect x="5" y="338" width="8" height="8" rx="1.5" fill="none" stroke="#d4d4d4" stroke-width="1.1"/><path d="M14 341 V347 H8" stroke="#999" stroke-width="1.4" fill="none"/><path d="M14 350 L16.5 350 L16.5 347.5 Z" fill="#999"/>
<rect x="5" y="357" width="2" height="2" fill="#e8e8e8"/><rect x="5" y="359" width="2" height="2" fill="#555"/><rect x="5" y="361" width="2" height="2" fill="#e8e8e8"/><rect x="5" y="363" width="2" height="2" fill="#555"/><rect x="5" y="365" width="2" height="2" fill="#e8e8e8"/><rect x="7" y="357" width="2" height="2" fill="#555"/><rect x="7" y="359" width="2" height="2" fill="#e8e8e8"/><rect x="7" y="361" width="2" height="2" fill="#555"/><rect x="7" y="363" width="2" height="2" fill="#e8e8e8"/><rect x="7" y="365" width="2" height="2" fill="#555"/><rect x="9" y="357" width="2" height="2" fill="#e8e8e8"/><rect x="9" y="359" width="2" height="2" fill="#555"/><rect x="9" y="361" width="2" height="2" fill="#e8e8e8"/><rect x="9" y="363" width="2" height="2" fill="#555"/><rect x="9" y="365" width="2" height="2" fill="#e8e8e8"/><rect x="11" y="357" width="2" height="2" fill="#555"/><rect x="11" y="359" width="2" height="2" fill="#e8e8e8"/><rect x="11" y="361" width="2" height="2" fill="#555"/><rect x="11" y="363" width="2" height="2" fill="#e8e8e8"/><rect x="11" y="365" width="2" height="2" fill="#555"/><rect x="13" y="357" width="2" height="2" fill="#e8e8e8"/><rect x="13" y="359" width="2" height="2" fill="#555"/><rect x="13" y="361" width="2" height="2" fill="#e8e8e8"/><rect x="13" y="363" width="2" height="2" fill="#555"/><rect x="13" y="365" width="2" height="2" fill="#e8e8e8"/>
<rect x="3" y="374" width="14" height="0.8" fill="#2c2b2f"/>
<path d="M5 392 L11 386" stroke="#d4d4d4" stroke-width="1.6"/><circle cx="12.5" cy="384.5" r="2" fill="#d4d4d4"/><path d="M14 394 L16.5 394 L16.5 391.5 Z" fill="#999"/>
<path d="M5 404 L9 400 L14 405 L10 409 Z" fill="none" stroke="#d4d4d4" stroke-width="1.1"/><path d="M11 409 L14 412" stroke="#d02040" stroke-width="1.5"/>
<rect x="3" y="420" width="14" height="0.8" fill="#2c2b2f"/>
<path d="M5.5 432 H14.5 M10 427.5 V436.5" stroke="#666" stroke-width="1"/>
</svg>
<!-- WEBCAM -->
<svg class="a" style="left:0;top:0" width="898" height="480" viewBox="0 0 898 480">
<defs>
<clipPath id="cc"><circle cx="81.8" cy="48.8" r="48.6"/></clipPath>
<linearGradient id="skin" x1="0" y1="0" x2="1" y2="0"><stop offset="0" stop-color="#b27570"/><stop offset="0.45" stop-color="#c68882"/><stop offset="0.8" stop-color="#cc9a94"/><stop offset="1" stop-color="#dcbcb6"/></linearGradient>
<linearGradient id="wallL" x1="0" y1="0" x2="1" y2="0"><stop offset="0" stop-color="#6a6a6c"/><stop offset="0.5" stop-color="#a2a2a4"/><stop offset="1" stop-color="#8a8a8c"/></linearGradient>
<filter id="bl" x="-20%" y="-20%" width="140%" height="140%"><feGaussianBlur stdDeviation="1.3"/></filter>
<filter id="bl2" x="-20%" y="-20%" width="140%" height="140%"><feGaussianBlur stdDeviation="0.6"/></filter>
</defs>
<g clip-path="url(#cc)">
<rect x="30" y="-5" width="105" height="110" fill="#202022"/>
<g filter="url(#bl)">
<path d="M34 26 Q38 18 42 17 L45 21 Q50 22 52 28 L52 56 L40 66 L33 66 Z" fill="url(#wallL)"/>
<path d="M30 64 L52 54 L58 100 L30 100 Z" fill="#1a1a1c"/>
<path d="M36 67 L50 55" stroke="#111" stroke-width="1.5"/>
<path d="M96 -2 Q126 6 134 40" stroke="#a4a4a8" stroke-width="3.2" fill="none"/>
<path d="M98 4 Q120 10 128 40 L110 40 L104 16 Z" fill="#3a3a3e"/>
<path d="M108 38 L134 40 L134 100 L112 90 Z" fill="#131830"/>
<path d="M118 46 L130 48 L128 80 L116 78 Z" fill="#1e2c70"/>
<path d="M46 86 Q60 78 82 88 Q100 80 122 84 L122 100 L44 100 Z" fill="#2c2224"/>
<path d="M62 76 Q82 92 108 76 L106 100 L64 100 Z" fill="#9a6064"/>
<path d="M52 36 Q52 26 80 26 Q108 26 110 36 Q113 58 108 72 Q100 86 82 88 Q62 87 56 74 Q51 60 52 36 Z" fill="url(#skin)"/>
<path d="M103 6 Q109 8 113 20 L114 40 L108 42 L105 28 Z" fill="#bcb6b6"/>
<path d="M102 26 Q112 28 112 40 L110 60 L104 58 Z" fill="#dcc4c0"/>
<ellipse cx="113.5" cy="48" rx="3.8" ry="10" fill="#c08c86"/>
<path d="M46 40 Q42 2 76 -4 Q104 -4 106 28 Q96 25 80 27 Q62 27 55 33 Q51 38 46 40 Z" fill="#2a1f1c"/>
<path d="M60 14 Q78 8 98 16 Q96 22 80 20 Q66 20 60 14 Z" fill="#3e2e28"/>
<path d="M56 34 Q65 31 74 34.5 L74 36.5 Q65 34 56 36.5 Z" fill="#6a4038"/>
<path d="M82 34 Q92 31 102 34 L102 36 Q92 33.5 82 36.5 Z" fill="#6a4038"/>
<ellipse cx="77" cy="56.5" rx="6" ry="3.5" fill="#c67a76"/>
<path d="M66 68.5 Q76 66.5 87 68.5 Q76 71 66 68.5 Z" fill="#9c5658"/>
</g>
<g filter="url(#bl)">
<path d="M47 83 L58 74 L62 76 L63 95 L52 89 Z" fill="#e4e4ec"/>
<path d="M106 71 L115 77 L118 84 L110 91 Z" fill="#dcdce4"/>
</g>
<g filter="url(#bl2)">
<rect x="51" y="36.8" width="24" height="15.5" rx="6" fill="#b08888" stroke="#2e1c28" stroke-width="2.4"/>
<rect x="79.4" y="36" width="24" height="15.5" rx="6" fill="#b08888" stroke="#2e1c28" stroke-width="2.4"/>
<path d="M75 41.5 Q77 39.5 79.4 41" stroke="#2e1c28" stroke-width="1.8" fill="none"/>
<path d="M103.4 39.5 L111 39.5" stroke="#2e1c28" stroke-width="1.6"/>
<ellipse cx="63" cy="43.5" rx="3" ry="1.6" fill="#5a4048"/>
<ellipse cx="91" cy="43" rx="3" ry="1.6" fill="#5a4048"/>
<ellipse cx="61" cy="45.5" rx="3" ry="1.2" fill="#e8e0e4"/><ellipse cx="67" cy="45.5" rx="2" ry="1" fill="#d8ccd0"/>
<ellipse cx="89" cy="45" rx="3" ry="1.2" fill="#e8e0e4"/><ellipse cx="95" cy="45" rx="2" ry="1" fill="#d8ccd0"/>
</g>
</g>
<rect x="72.5" y="0" width="19" height="8.5" fill="#5c1ccc"/>
<circle cx="78" cy="4" r="0.9" fill="#fff"/><circle cx="82" cy="4" r="0.9" fill="#fff"/><circle cx="86" cy="4" r="0.9" fill="#fff"/>
</svg>

</div></body></html>
